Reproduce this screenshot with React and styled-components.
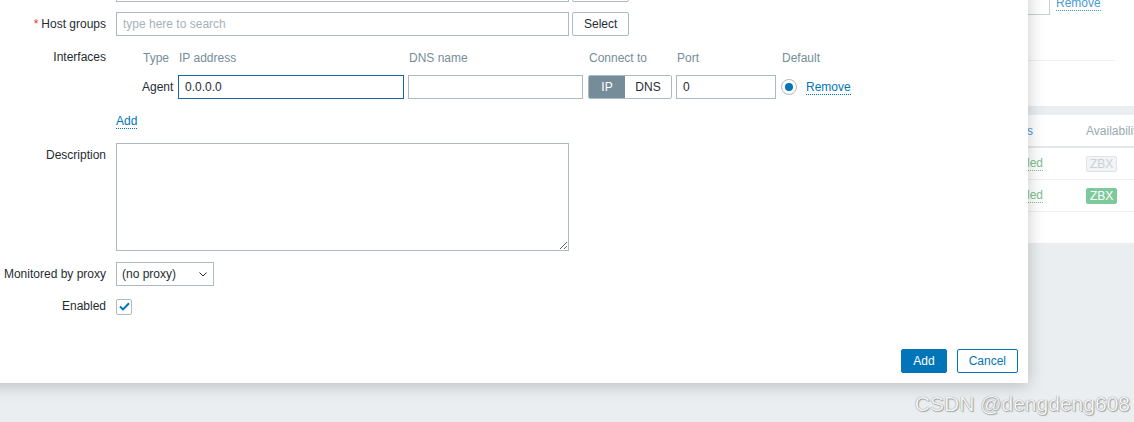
import React from "react";
import styled, { createGlobalStyle } from "styled-components";

const GlobalStyle = createGlobalStyle`
  * { box-sizing: border-box; }
  html, body { margin: 0; padding: 0; }
  body {
    width: 1134px;
    height: 422px;
    overflow: hidden;
    background: #ebeef0;
    font-family: "Liberation Sans", Arial, sans-serif;
    font-size: 12px;
    color: #1f2c33;
  }
`;

const INTERFACE_HEADERS = ["IP address", "DNS name", "Connect to", "Port", "Default"];

export default function App() {
  return (
    <Page>
      <GlobalStyle />
      <BackPanel $height={106} $right={19}>
        <BackTopRow>
          <GhostInput />
          <GhostLink>Remove</GhostLink>
        </BackTopRow>
        <BackRule />
      </BackPanel>
      <BackPanel $height={128} $gap={9}>
        <BackRow $head>
          <span />
          <BackHeadLink>Status</BackHeadLink>
          <BackHeadText>Availability</BackHeadText>
        </BackRow>
        <BackRow>
          <span />
          <StatusLink>Enabled</StatusLink>
          <span>
            <Badge>ZBX</Badge>
          </span>
        </BackRow>
        <BackRow>
          <span />
          <StatusLink>Enabled</StatusLink>
          <span>
            <Badge $ok>ZBX</Badge>
          </span>
        </BackRow>
      </BackPanel>

      <Modal>
        <ModalBody>
          <FormGrid>
            <Label>Templates</Label>
            <FieldRow>
              <TextInput $width={453} readOnly placeholder="type here to search" />
              <Button>Select</Button>
            </FieldRow>

            <Label>
              <Required>*</Required>Host groups
            </Label>
            <FieldRow>
              <TextInput $width={453} readOnly placeholder="type here to search" />
              <Button>Select</Button>
            </FieldRow>

            <Label $line={23}>Interfaces</Label>
            <FieldColumn>
              <InterfaceGrid>
                <TypeCell $head>Type</TypeCell>
                {INTERFACE_HEADERS.map((h) => (
                  <HeaderCell key={h}>{h}</HeaderCell>
                ))}
                <TypeCell>Agent</TypeCell>
                <div>
                  <TextInput $width={226} $focus readOnly value="0.0.0.0" />
                </div>
                <div>
                  <TextInput $width={175} readOnly value="" />
                </div>
                <Toggle>
                  <ToggleOption $active $width={36}>IP</ToggleOption>
                  <ToggleOption $width={46}>DNS</ToggleOption>
                </Toggle>
                <div>
                  <TextInput $width={100} readOnly value="0" />
                </div>
                <DefaultCell>
                  <Radio />
                  <Link>Remove</Link>
                </DefaultCell>
              </InterfaceGrid>
              <AddRow>
                <Link>Add</Link>
              </AddRow>
            </FieldColumn>

            <Label>Description</Label>
            <FieldColumn $pad={1}>
              <TextArea readOnly />
            </FieldColumn>

            <Label>Monitored by proxy</Label>
            <FieldRow>
              <Select>
                <span>(no proxy)</span>
                <svg width="8" height="5" viewBox="0 0 8 5">
                  <path d="M0.5 0.5 L4 4 L7.5 0.5" fill="none" stroke="#1f2c33" strokeWidth="1" />
                </svg>
              </Select>
            </FieldRow>

            <Label $line={21}>Enabled</Label>
            <FieldRow $height={21}>
              <Checkbox>
                <svg width="11" height="9" viewBox="0 0 11 9">
                  <path d="M1 4.6 L4 7.4 L10 1.2" fill="none" stroke="#0275b8" strokeWidth="2" />
                </svg>
              </Checkbox>
            </FieldRow>
          </FormGrid>
        </ModalBody>
        <ModalFooter>
          <Button $primary>Add</Button>
          <Button $outline>Cancel</Button>
        </ModalFooter>
      </Modal>

      <Watermark>CSDN @dengdeng608</Watermark>
    </Page>
  );
}

const Page = styled.div`
  position: relative;
  width: 1134px;
  height: 422px;
  overflow: hidden;
  display: flex;
  flex-direction: column;
`;

/* ---------- page behind the dialog ---------- */

const BackPanel = styled.div`
  background: #ffffff;
  height: ${(p) => p.$height}px;
  margin-top: ${(p) => p.$gap || 0}px;
  padding: 0 ${(p) => p.$right || 0}px 0 20px;
  flex-shrink: 0;
`;

const BackTopRow = styled.div`
  display: grid;
  grid-template-columns: 1030px 1fr;
  align-items: center;
  margin-top: -8px;
`;

const GhostInput = styled.div`
  height: 24px;
  margin-top: -1px;
  border: 1px solid #c6d0d5;
`;

const GhostLink = styled.span`
  justify-self: start;
  margin-left: 6px;
  color: #4a9bd1;
  line-height: 14px;
  border-bottom: 1px dotted #4a9bd1;
`;

const BackRule = styled.div`
  margin-top: 45px;
  height: 1px;
  background: #eef0f2;
`;

const BackRow = styled.div`
  display: grid;
  grid-template-columns: 979px 87px 1fr;
  align-items: center;
  height: ${(p) => (p.$head ? 33 : 32)}px;
  border-bottom: ${(p) => (p.$head ? "2px solid #e4e8eb" : "1px solid #eef0f2")};
`;

const BackHeadLink = styled.span`
  color: #4a9bd1;
`;

const BackHeadText = styled.span`
  color: #9aa9b1;
  white-space: nowrap;
`;

const StatusLink = styled.span`
  justify-self: start;
  color: #7dbf8a;
  line-height: 14px;
  border-bottom: 1px dotted #7dbf8a;
`;

const Badge = styled.span`
  display: inline-block;
  height: 16px;
  line-height: 14px;
  padding: 0 3px;
  border-radius: 2px;
  border: 1px solid ${(p) => (p.$ok ? "#7ec99b" : "#e0e4e7")};
  background: ${(p) => (p.$ok ? "#7ec99b" : "#f3f4f5")};
  color: ${(p) => (p.$ok ? "#ffffff" : "#cad1d5")};
`;

/* ---------- dialog ---------- */

const Modal = styled.div`
  position: absolute;
  top: -32px;
  left: -20px;
  width: 1048px;
  height: 415px;
  background: #ffffff;
  box-shadow: 0 2px 16px rgba(0, 0, 0, 0.22);
  display: flex;
  flex-direction: column;
`;

const ModalBody = styled.div`
  flex: 1;
  padding: 10px 10px 0 10px;
`;

const FormGrid = styled.div`
  display: grid;
  grid-template-columns: 116px 1fr;
  column-gap: 10px;
  row-gap: 10px;
  align-items: start;
`;

const Label = styled.div`
  text-align: right;
  white-space: nowrap;
  line-height: ${(p) => p.$line || 24}px;
  color: #1f2c33;
`;

const Required = styled.span`
  color: #e33734;
  margin-right: 3px;
`;

const FieldRow = styled.div`
  display: flex;
  align-items: center;
  gap: 3px;
  height: ${(p) => p.$height || 24}px;
`;

const FieldColumn = styled.div`
  display: flex;
  flex-direction: column;
  align-items: flex-start;
  padding-bottom: ${(p) => p.$pad || 0}px;
`;

const TextInput = styled.input`
  display: block;
  width: ${(p) => p.$width}px;
  height: 24px;
  margin: 0;
  padding: 0 6px;
  border: 1px solid ${(p) => (p.$focus ? "#1565a6" : "#acbbc2")};
  border-radius: 0;
  outline: none;
  background: #ffffff;
  font: inherit;
  color: #1f2c33;
  &::placeholder {
    color: #a4b2ba;
  }
`;

const Button = styled.button`
  height: 24px;
  margin: 0;
  padding: 0 11px;
  border-radius: 2px;
  font: inherit;
  cursor: pointer;
  border: 1px solid ${(p) => (p.$primary || p.$outline ? "#0275b8" : "#acbbc2")};
  background: ${(p) => (p.$primary ? "#0275b8" : "#ffffff")};
  color: ${(p) => (p.$primary ? "#ffffff" : p.$outline ? "#0275b8" : "#1f2c33")};
`;

const InterfaceGrid = styled.div`
  display: grid;
  grid-template-columns: 62px 230px 180px 88px 105px auto;
  grid-template-rows: 23px 24px;
  row-gap: 6px;
  align-items: center;
`;

const HeaderCell = styled.div`
  color: #768d99;
  padding-left: 1px;
  white-space: nowrap;
`;

const TypeCell = styled.div`
  padding-left: ${(p) => (p.$head ? 27 : 26)}px;
  color: ${(p) => (p.$head ? "#768d99" : "#1f2c33")};
`;

const Toggle = styled.div`
  display: flex;
  width: 84px;
  height: 24px;
  border: 1px solid #acbbc2;
  border-radius: 2px;
  overflow: hidden;
`;

const ToggleOption = styled.div`
  width: ${(p) => p.$width}px;
  display: flex;
  align-items: center;
  justify-content: center;
  background: ${(p) => (p.$active ? "#768d99" : "#ffffff")};
  color: ${(p) => (p.$active ? "#ffffff" : "#1f2c33")};
`;

const DefaultCell = styled.div`
  display: flex;
  align-items: center;
  gap: 9px;
`;

const Radio = styled.span`
  position: relative;
  width: 16px;
  height: 16px;
  border: 1px solid #acbbc2;
  border-radius: 50%;
  background: #ffffff;
  &::after {
    content: "";
    position: absolute;
    top: 3px;
    left: 3px;
    width: 8px;
    height: 8px;
    border-radius: 50%;
    background: #0275b8;
  }
`;

const Link = styled.span`
  display: inline-block;
  color: #0275b8;
  line-height: 14px;
  border-bottom: 1px dotted #0275b8;
  cursor: pointer;
`;

const AddRow = styled.div`
  padding: 15px 0 4px 0;
`;

const TextArea = styled.textarea`
  display: block;
  width: 453px;
  height: 108px;
  margin: 0;
  padding: 4px 6px;
  border: 1px solid #acbbc2;
  border-radius: 0;
  outline: none;
  resize: both;
  font: inherit;
`;

const Select = styled.div`
  width: 98px;
  height: 24px;
  display: flex;
  align-items: center;
  justify-content: space-between;
  padding: 0 6px 0 5px;
  border: 1px solid #acbbc2;
  background: #ffffff;
`;

const Checkbox = styled.span`
  width: 16px;
  height: 16px;
  display: flex;
  align-items: center;
  justify-content: center;
  border: 1px solid #acbbc2;
  border-radius: 2px;
  background: #ffffff;
`;

const ModalFooter = styled.div`
  display: flex;
  justify-content: flex-end;
  gap: 10px;
  padding: 10px;
`;

const Watermark = styled.div`
  position: absolute;
  right: 4px;
  bottom: 6px;
  font-family: "Liberation Sans", Arial, sans-serif;
  font-size: 21px;
  color: #f4f5f6;
  text-shadow: 0 0 1px rgba(0, 0, 0, 0.55), 1px 1px 1px rgba(0, 0, 0, 0.25);
  white-space: nowrap;
`;
